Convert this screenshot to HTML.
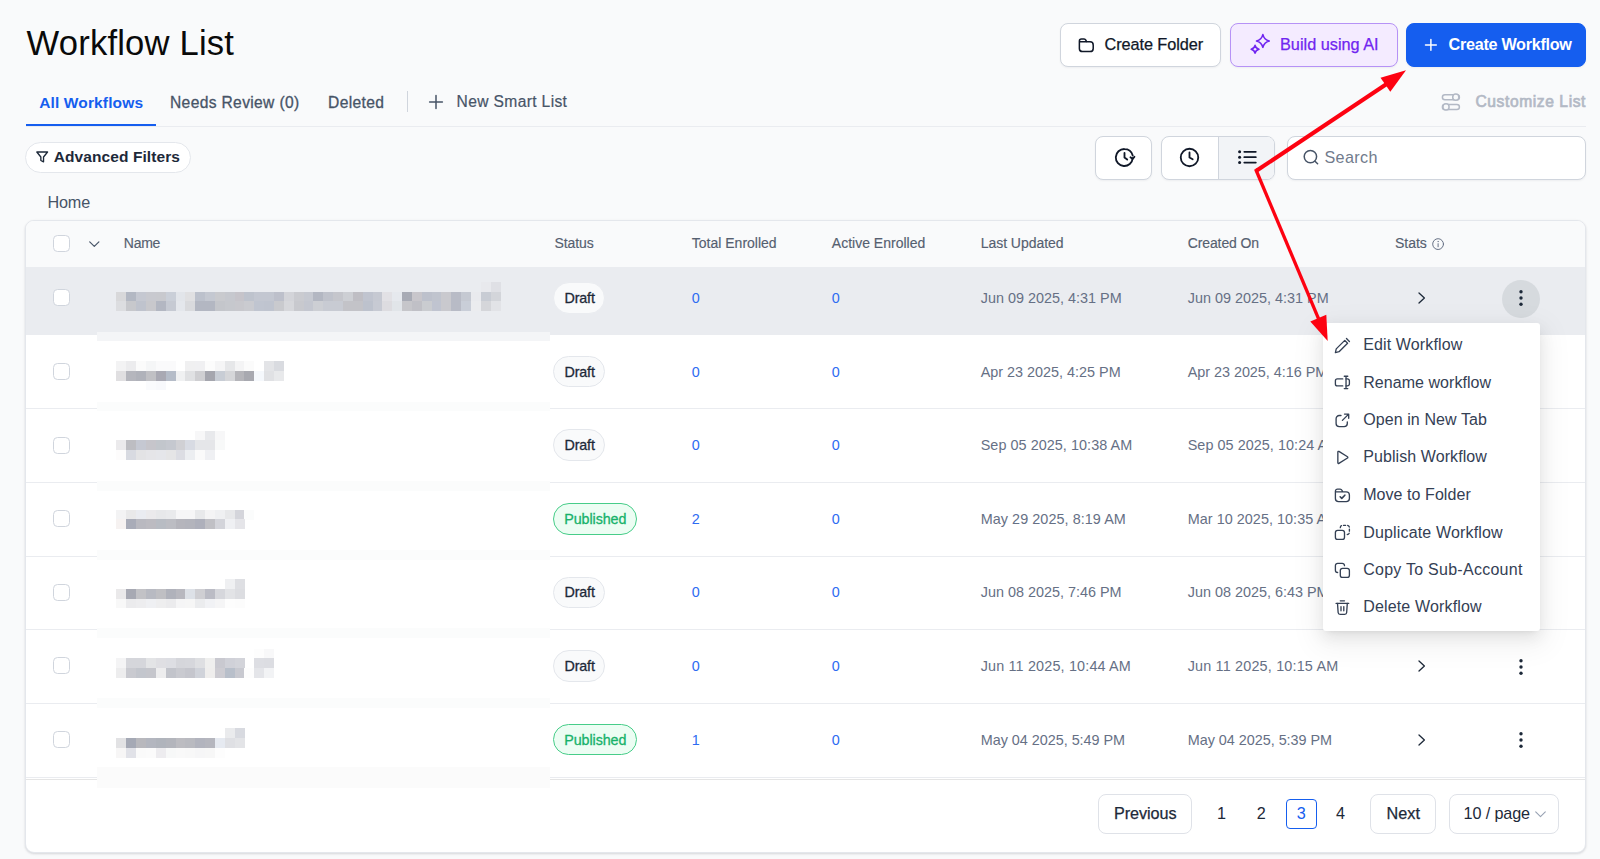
<!DOCTYPE html>
<html lang="en">
<head>
<meta charset="utf-8">
<title>Workflow List</title>
<style>
*{box-sizing:border-box}
html,body{margin:0;padding:0}
body{width:1600px;height:859px;overflow:hidden;position:relative;background:#f9fafb;font-family:"Liberation Sans",sans-serif;color:#101828}
.abs,.t,svg.i{position:absolute}
.t{white-space:pre;line-height:1;margin:0;font-weight:400;z-index:5}
h1.t{font-weight:400}
svg.i{fill:none;stroke-linecap:round;stroke-linejoin:round;overflow:visible;z-index:5}
.btn{position:absolute;border-radius:8px;border:1px solid #d0d5dd;background:#fff;box-shadow:0 1px 2px rgba(16,24,40,.05)}
.card{left:25px;top:220px;width:1561px;height:633px;border:1px solid #e4e7ec;border-radius:9px;background:#fff;box-shadow:0 1px 3px rgba(16,24,40,.10),0 1px 2px rgba(16,24,40,.06);overflow:hidden}
.thead{left:0;top:0;width:100%;height:46px;background:#f9fafb}
.row-hi{left:0;top:46px;width:100%;height:68px;background:#eaecf0}
.line{left:0;width:100%;height:1px;background:#eaecf0}
.cb{position:absolute;left:53.2px;width:17px;height:17px;border:1px solid #d0d5dd;border-radius:4.5px;background:#fff;z-index:4}
.pill{position:absolute;left:553.3px;height:31.5px;border-radius:16px;border:1px solid #e4e7ec;background:#f9fafb;z-index:3}
.pill.d{width:52px}
.pill.p{width:83.5px;border-color:#47cd89;background:#ecfdf3}
.menu{left:1323.3px;top:323px;width:216.7px;height:308px;background:#fff;border-radius:3px;z-index:8;box-shadow:0 3px 6px -4px rgba(0,0,0,.12),0 6px 16px 0 rgba(0,0,0,.08),0 9px 28px 8px rgba(0,0,0,.05)}
.t.dd{z-index:9}
.pg{position:absolute;top:794px;height:39.500px;border:1px solid #dfe2e8;border-radius:8px;background:#fff;z-index:3}
</style>
</head>
<body>

<!-- ======= page header buttons ======= -->
<div class="btn" style="left:1060px;top:22.500px;width:161.400px;height:44px"></div>
<div class="btn" style="left:1230px;top:22.500px;width:167.600px;height:44px;border-color:#b692f6;background:#f4ebff"></div>
<div class="btn" style="left:1406.400px;top:22.500px;width:179.600px;height:44px;border-color:#155eef;background:#155eef"></div>

<!-- folder icon -->
<svg class="i" style="left:1078.3px;top:36.8px" width="16.6" height="16.6" viewBox="0 0 24 24" stroke="#101828" stroke-width="2.2"><path d="M12.5 7l-1.2-2.4A2.8 2.8 0 0 0 8.8 3H5a3 3 0 0 0-3 3v1m0 0h15.5A4.5 4.5 0 0 1 22 11.5v5a4.500 4.500 0 0 1-4.500 4.500H6.500A4.500 4.500 0 0 1 2 16.500z"/></svg>
<!-- sparkle icon -->
<svg class="i" style="left:1249.6px;top:34.2px" width="20.6" height="20.6" viewBox="0 0 24 24" stroke="#7025f0" stroke-width="1.900"><path d="M15.00 0.70Q16.48 6.62 22.40 8.10Q16.48 9.58 15.00 15.50Q13.52 9.58 7.60 8.10Q13.52 6.62 15.00 0.70z"/><path d="M5.90 13.30Q6.80 16.90 10.40 17.80Q6.80 18.70 5.90 22.30Q5.00 18.70 1.40 17.80Q5.00 16.90 5.90 13.30z"/></svg>
<!-- plus (create workflow) -->
<svg class="i" style="left:1425px;top:39.2px" width="11.8" height="11.8" viewBox="0 0 12 12" stroke="#fff" stroke-width="1.5"><path d="M6 .5v11M.5 6h11"/></svg>

<!-- ======= tabs ======= -->
<div class="abs" style="left:26px;top:126px;width:1560px;height:1px;background:#eaecf0"></div>
<div class="abs" style="left:26px;top:123.6px;width:130px;height:2.6px;background:#155eef"></div>
<div class="abs" style="left:407px;top:91px;width:1px;height:21px;background:#d0d5dd"></div>
<svg class="i" style="left:429.4px;top:95px" width="14" height="14" viewBox="0 0 14 14" stroke="#475467" stroke-width="1.5"><path d="M7 .6v12.800M.6 7h12.800"/></svg>
<!-- customize list icon -->
<svg class="i" style="left:1441px;top:92px" width="20" height="20" viewBox="0 0 20 20" stroke="#b3b9c5" stroke-width="1.500"><rect x="1.400" y="2.700" width="17" height="5" rx="2.500"/><circle cx="14.800" cy="5.200" r="3.100" fill="#f9fafb"/><rect x="1.400" y="12.400" width="17" height="5" rx="2.500"/><circle cx="5" cy="14.900" r="3.100" fill="#f9fafb"/></svg>

<!-- ======= toolbar ======= -->
<div class="abs" style="left:25px;top:142px;width:166px;height:31px;border:1px solid #e4e7ec;border-radius:16px;background:#fff"></div>
<svg class="i" style="left:36.400px;top:151.300px" width="12.400" height="12.400" viewBox="0 0 12 12" stroke="#1d2939" stroke-width="1.300"><path d="M.8 1h10.400L7.300 5.800v4.700L4.700 9.200V5.800z"/></svg>

<div class="btn" style="left:1095px;top:136px;width:57px;height:44px"></div>
<div class="btn" style="left:1161px;top:136px;width:114px;height:44px;overflow:hidden"><div class="abs" style="left:56px;top:0;width:58px;height:100%;background:#f2f4f7;border-left:1px solid #d0d5dd"></div></div>
<div class="btn" style="left:1287px;top:136px;width:299px;height:44px"></div>
<!-- clock fast-forward -->
<svg class="i" style="left:1113.5px;top:147px" width="21" height="21" viewBox="0 0 24 24" stroke="#101828" stroke-width="2.100"><path d="M21.400 12.900A9.700 9.700 0 1 1 12 2.300a9.700 9.700 0 0 1 9.400 7.400"/><path d="M12 6.800V12l3.100 2.400"/><path d="M23.300 11.200l-2 2.400-2.500-1.900" /></svg>
<!-- clock -->
<svg class="i" style="left:1178.9px;top:147px" width="21" height="21" viewBox="0 0 24 24" stroke="#101828" stroke-width="2.100"><circle cx="12" cy="12" r="10"/><path d="M12 6.300V12l3.600 2"/></svg>
<!-- list -->
<svg class="i" style="left:1237px;top:148px" width="20" height="18" viewBox="0 0 20 18" stroke="#101828" stroke-width="1.800"><path d="M7.300 3.800h11.500M7.300 9.200h11.500M7.300 14.600h11.500"/><g fill="#101828" stroke="none"><circle cx="2.600" cy="3.800" r="1.500"/><circle cx="2.600" cy="9.200" r="1.500"/><circle cx="2.600" cy="14.600" r="1.500"/></g></svg>
<!-- search -->
<svg class="i" style="left:1302.500px;top:149px" width="16" height="16" viewBox="0 0 16 16" stroke="#475467" stroke-width="1.500"><circle cx="7.400" cy="7.600" r="6.200"/><path d="M12 12.200l2.600 2.600"/></svg>

<!-- ======= table card ======= -->
<div class="abs card">
  <div class="abs thead"></div>
  <div class="abs row-hi"></div>
  <div class="abs line" style="top:187px"></div>
  <div class="abs line" style="top:260.500px"></div>
  <div class="abs line" style="top:335px"></div>
  <div class="abs line" style="top:408px"></div>
  <div class="abs line" style="top:481.500px"></div>
  <div class="abs line" style="top:555.500px"></div>
  <div class="abs line" style="top:557.500px;background:#e5e5e5"></div>
</div>

<!-- checkboxes -->
<div class="cb" style="top:235.200px"></div>
<div class="cb" style="top:288.900px"></div>
<div class="cb" style="top:362.900px"></div>
<div class="cb" style="top:436.500px"></div>
<div class="cb" style="top:510px"></div>
<div class="cb" style="top:583.600px"></div>
<div class="cb" style="top:657.200px"></div>
<div class="cb" style="top:730.800px"></div>
<!-- header chevron + info -->
<svg class="i" style="left:88.600px;top:240.800px" width="10.600" height="6.400" viewBox="0 0 10.600 6.400" stroke="#475467" stroke-width="1.200"><path d="M.7.800l4.600 4.600L9.900.8"/></svg>
<svg class="i" style="left:1432.300px;top:237.600px" width="12.200" height="12.200" viewBox="0 0 12.200 12.200" stroke="#667085" stroke-width="1"><circle cx="6.100" cy="6.100" r="5.400"/><path d="M6.100 5.700v3.100"/><circle cx="6.100" cy="3.600" r=".45" fill="#667085" stroke-width=".4"/></svg>

<!-- mosaic (pixelated/redacted workflow names) -->
<svg class="abs" style="left:0;top:0;z-index:2" width="1600" height="859" viewBox="0 0 1600 859" shape-rendering="crispEdges">
<rect x="96.8" y="331.7" width="452.9" height="455.9" fill="#ffffff"/>
<rect x="96.8" y="331.7" width="452.9" height="9.75" fill="#f4f5f7"/>
<rect x="96.8" y="401.5" width="452.9" height="9.75" fill="#fbfcfc"/>
<rect x="96.8" y="480.9" width="452.9" height="9.75" fill="#fbfcfc"/>
<rect x="96.8" y="550.3" width="452.9" height="9.75" fill="#fbfcfc"/>
<rect x="96.8" y="628.4" width="452.9" height="9.75" fill="#fbfcfc"/>
<rect x="96.8" y="698.0" width="452.9" height="9.75" fill="#fbfcfc"/>
<rect x="96.8" y="767.0" width="452.9" height="20.6" fill="#fbfbfb"/>
<rect x="480.85" y="282.00" width="9.90" height="9.80" fill="#e8e9ed"/>
<rect x="490.70" y="282.00" width="9.90" height="9.80" fill="#dfe0e5"/>
<rect x="116.40" y="291.60" width="9.90" height="9.80" fill="#d8d8da"/>
<rect x="126.25" y="291.60" width="9.90" height="9.80" fill="#b3b8c3"/>
<rect x="136.10" y="291.60" width="9.90" height="9.80" fill="#c5c8d1"/>
<rect x="145.95" y="291.60" width="9.90" height="9.80" fill="#c8c9cf"/>
<rect x="155.80" y="291.60" width="9.90" height="9.80" fill="#c8c9ce"/>
<rect x="165.65" y="291.60" width="9.90" height="9.80" fill="#cacfd8"/>
<rect x="175.50" y="291.60" width="9.90" height="9.80" fill="#e2e5ea"/>
<rect x="185.35" y="291.60" width="9.90" height="9.80" fill="#e0e0e2"/>
<rect x="195.20" y="291.60" width="9.90" height="9.80" fill="#bcc1cc"/>
<rect x="205.05" y="291.60" width="9.90" height="9.80" fill="#c4c8d1"/>
<rect x="214.90" y="291.60" width="9.90" height="9.80" fill="#c9cace"/>
<rect x="224.75" y="291.60" width="9.90" height="9.80" fill="#c6c8ce"/>
<rect x="234.60" y="291.60" width="9.90" height="9.80" fill="#c6c4ca"/>
<rect x="244.45" y="291.60" width="9.90" height="9.80" fill="#bec3cd"/>
<rect x="254.30" y="291.60" width="9.90" height="9.80" fill="#c3c7d1"/>
<rect x="264.15" y="291.60" width="9.90" height="9.80" fill="#c3c7d1"/>
<rect x="274.00" y="291.60" width="9.90" height="9.80" fill="#bdc0cb"/>
<rect x="283.85" y="291.60" width="9.90" height="9.80" fill="#d3d4d9"/>
<rect x="293.70" y="291.60" width="9.90" height="9.80" fill="#cacbd0"/>
<rect x="303.55" y="291.60" width="9.90" height="9.80" fill="#c6c9d1"/>
<rect x="313.40" y="291.60" width="9.90" height="9.80" fill="#b3b7c2"/>
<rect x="323.25" y="291.60" width="9.90" height="9.80" fill="#bfc2cb"/>
<rect x="333.10" y="291.60" width="9.90" height="9.80" fill="#c5c6cc"/>
<rect x="342.95" y="291.60" width="9.90" height="9.80" fill="#cdcfd4"/>
<rect x="352.80" y="291.60" width="9.90" height="9.80" fill="#bfbec4"/>
<rect x="362.65" y="291.60" width="9.90" height="9.80" fill="#c0c4cf"/>
<rect x="372.50" y="291.60" width="9.90" height="9.80" fill="#c6c9d2"/>
<rect x="382.35" y="291.60" width="9.90" height="9.80" fill="#e2e1e5"/>
<rect x="392.20" y="291.60" width="9.90" height="9.80" fill="#e6e9ee"/>
<rect x="402.05" y="291.60" width="9.90" height="9.80" fill="#a8abb5"/>
<rect x="411.90" y="291.60" width="9.90" height="9.80" fill="#c8c6cb"/>
<rect x="421.75" y="291.60" width="9.90" height="9.80" fill="#bdc1cc"/>
<rect x="431.60" y="291.60" width="9.90" height="9.80" fill="#c0c4ce"/>
<rect x="441.45" y="291.60" width="9.90" height="9.80" fill="#c9c9ce"/>
<rect x="451.30" y="291.60" width="9.90" height="9.80" fill="#b8bbc6"/>
<rect x="461.15" y="291.60" width="9.90" height="9.80" fill="#c5c9d2"/>
<rect x="471.00" y="291.60" width="9.90" height="9.80" fill="#e9eaee"/>
<rect x="480.85" y="291.60" width="9.90" height="9.80" fill="#c8ccd4"/>
<rect x="490.70" y="291.60" width="9.90" height="9.80" fill="#d3d5da"/>
<rect x="116.40" y="301.30" width="9.90" height="9.80" fill="#dcdde0"/>
<rect x="126.25" y="301.30" width="9.90" height="9.80" fill="#c7c8cc"/>
<rect x="136.10" y="301.30" width="9.90" height="9.80" fill="#bfc3cd"/>
<rect x="145.95" y="301.30" width="9.90" height="9.80" fill="#c8c8cc"/>
<rect x="155.80" y="301.30" width="9.90" height="9.80" fill="#b3b7c2"/>
<rect x="165.65" y="301.30" width="9.90" height="9.80" fill="#c6cad3"/>
<rect x="175.50" y="301.30" width="9.90" height="9.80" fill="#e4e7ec"/>
<rect x="185.35" y="301.30" width="9.90" height="9.80" fill="#d9dadd"/>
<rect x="195.20" y="301.30" width="9.90" height="9.80" fill="#b3b7c2"/>
<rect x="205.05" y="301.30" width="9.90" height="9.80" fill="#b3b7c2"/>
<rect x="214.90" y="301.30" width="9.90" height="9.80" fill="#c4c6cb"/>
<rect x="224.75" y="301.30" width="9.90" height="9.80" fill="#c6c8cd"/>
<rect x="234.60" y="301.30" width="9.90" height="9.80" fill="#c8c8cd"/>
<rect x="244.45" y="301.30" width="9.90" height="9.80" fill="#cacbd0"/>
<rect x="254.30" y="301.30" width="9.90" height="9.80" fill="#c0c5d0"/>
<rect x="264.15" y="301.30" width="9.90" height="9.80" fill="#bfc4cf"/>
<rect x="274.00" y="301.30" width="9.90" height="9.80" fill="#c9cace"/>
<rect x="283.85" y="301.30" width="9.90" height="9.80" fill="#d6d7db"/>
<rect x="293.70" y="301.30" width="9.90" height="9.80" fill="#c8c9ce"/>
<rect x="303.55" y="301.30" width="9.90" height="9.80" fill="#c4c7d0"/>
<rect x="313.40" y="301.30" width="9.90" height="9.80" fill="#cdcfd4"/>
<rect x="323.25" y="301.30" width="9.90" height="9.80" fill="#c8cbd3"/>
<rect x="333.10" y="301.30" width="9.90" height="9.80" fill="#c8cbd3"/>
<rect x="342.95" y="301.30" width="9.90" height="9.80" fill="#c3c3c8"/>
<rect x="352.80" y="301.30" width="9.90" height="9.80" fill="#c3c3c8"/>
<rect x="362.65" y="301.30" width="9.90" height="9.80" fill="#bdc2cd"/>
<rect x="372.50" y="301.30" width="9.90" height="9.80" fill="#c7cad3"/>
<rect x="382.35" y="301.30" width="9.90" height="9.80" fill="#dddce0"/>
<rect x="392.20" y="301.30" width="9.90" height="9.80" fill="#e1e5e9"/>
<rect x="402.05" y="301.30" width="9.90" height="9.80" fill="#c6c6ca"/>
<rect x="411.90" y="301.30" width="9.90" height="9.80" fill="#c0c0c6"/>
<rect x="421.75" y="301.30" width="9.90" height="9.80" fill="#caccd0"/>
<rect x="431.60" y="301.30" width="9.90" height="9.80" fill="#c0c4d0"/>
<rect x="441.45" y="301.30" width="9.90" height="9.80" fill="#c9c9ce"/>
<rect x="451.30" y="301.30" width="9.90" height="9.80" fill="#b8bbc6"/>
<rect x="461.15" y="301.30" width="9.90" height="9.80" fill="#c9ced8"/>
<rect x="471.00" y="301.30" width="9.90" height="9.80" fill="#ebecef"/>
<rect x="480.85" y="301.30" width="9.90" height="9.80" fill="#d5d6da"/>
<rect x="490.70" y="301.30" width="9.90" height="9.80" fill="#e2e3e7"/>
<rect x="116.40" y="361.00" width="9.90" height="9.80" fill="#f3f3f4"/>
<rect x="126.25" y="361.00" width="9.90" height="9.80" fill="#ececee"/>
<rect x="136.10" y="361.00" width="9.90" height="9.80" fill="#fbfbfb"/>
<rect x="145.95" y="361.00" width="9.90" height="9.80" fill="#f5f6f7"/>
<rect x="155.80" y="361.00" width="9.90" height="9.80" fill="#fafafb"/>
<rect x="165.65" y="361.00" width="9.90" height="9.80" fill="#fafafb"/>
<rect x="185.35" y="361.00" width="9.90" height="9.80" fill="#f0f0f1"/>
<rect x="195.20" y="361.00" width="9.90" height="9.80" fill="#f0f0f2"/>
<rect x="205.05" y="361.00" width="9.90" height="9.80" fill="#fcfcfc"/>
<rect x="214.90" y="361.00" width="9.90" height="9.80" fill="#f5f5f6"/>
<rect x="224.75" y="361.00" width="9.90" height="9.80" fill="#e6e7e9"/>
<rect x="234.60" y="361.00" width="9.90" height="9.80" fill="#f4f4f5"/>
<rect x="244.45" y="361.00" width="9.90" height="9.80" fill="#fbfbfb"/>
<rect x="264.15" y="361.00" width="9.90" height="9.80" fill="#e3e4e7"/>
<rect x="274.00" y="361.00" width="9.90" height="9.80" fill="#d9dbe0"/>
<rect x="116.40" y="370.80" width="9.90" height="9.80" fill="#e0dfe1"/>
<rect x="126.25" y="370.80" width="9.90" height="9.80" fill="#b5b6bd"/>
<rect x="136.10" y="370.80" width="9.90" height="9.80" fill="#b0b2ba"/>
<rect x="145.95" y="370.80" width="9.90" height="9.80" fill="#c0c0c4"/>
<rect x="155.80" y="370.80" width="9.90" height="9.80" fill="#a9a9b3"/>
<rect x="165.65" y="370.80" width="9.90" height="9.80" fill="#b5bcc8"/>
<rect x="175.50" y="370.80" width="9.90" height="9.80" fill="#f0f1f2"/>
<rect x="185.35" y="370.80" width="9.90" height="9.80" fill="#e0e1e3"/>
<rect x="195.20" y="370.80" width="9.90" height="9.80" fill="#cfcfd2"/>
<rect x="205.05" y="370.80" width="9.90" height="9.80" fill="#a5a6ae"/>
<rect x="214.90" y="370.80" width="9.90" height="9.80" fill="#c8cdd5"/>
<rect x="224.75" y="370.80" width="9.90" height="9.80" fill="#d5d6d9"/>
<rect x="234.60" y="370.80" width="9.90" height="9.80" fill="#b5b5ba"/>
<rect x="244.45" y="370.80" width="9.90" height="9.80" fill="#a8a9b0"/>
<rect x="254.30" y="370.80" width="9.90" height="9.80" fill="#f5f8fc"/>
<rect x="264.15" y="370.80" width="9.90" height="9.80" fill="#e0e1e4"/>
<rect x="274.00" y="370.80" width="9.90" height="9.80" fill="#e8e9eb"/>
<rect x="145.95" y="380.50" width="9.90" height="9.80" fill="#fafbfd"/>
<rect x="155.80" y="380.50" width="9.90" height="9.80" fill="#f8f9fc"/>
<rect x="195.20" y="430.60" width="9.90" height="9.80" fill="#f7f7f8"/>
<rect x="205.05" y="430.60" width="9.90" height="9.80" fill="#e8e9ec"/>
<rect x="214.90" y="430.60" width="9.90" height="9.80" fill="#f7f7f8"/>
<rect x="116.40" y="440.40" width="9.90" height="9.80" fill="#ebeaec"/>
<rect x="126.25" y="440.40" width="9.90" height="9.80" fill="#bdbdc2"/>
<rect x="136.10" y="440.40" width="9.90" height="9.80" fill="#c5c8d2"/>
<rect x="145.95" y="440.40" width="9.90" height="9.80" fill="#c6c5cb"/>
<rect x="155.80" y="440.40" width="9.90" height="9.80" fill="#c2c6cc"/>
<rect x="165.65" y="440.40" width="9.90" height="9.80" fill="#c5c8cf"/>
<rect x="175.50" y="440.40" width="9.90" height="9.80" fill="#d0d0d4"/>
<rect x="185.35" y="440.40" width="9.90" height="9.80" fill="#d8dbe3"/>
<rect x="195.20" y="440.40" width="9.90" height="9.80" fill="#e5e6e9"/>
<rect x="205.05" y="440.40" width="9.90" height="9.80" fill="#e5e6e9"/>
<rect x="214.90" y="440.40" width="9.90" height="9.80" fill="#f8f9f9"/>
<rect x="116.40" y="450.10" width="9.90" height="9.80" fill="#fdfcfc"/>
<rect x="126.25" y="450.10" width="9.90" height="9.80" fill="#d8dae1"/>
<rect x="136.10" y="450.10" width="9.90" height="9.80" fill="#e3e3e5"/>
<rect x="145.95" y="450.10" width="9.90" height="9.80" fill="#e5e5e8"/>
<rect x="155.80" y="450.10" width="9.90" height="9.80" fill="#e5e6ea"/>
<rect x="165.65" y="450.10" width="9.90" height="9.80" fill="#e5e5e6"/>
<rect x="175.50" y="450.10" width="9.90" height="9.80" fill="#dcdde3"/>
<rect x="185.35" y="450.10" width="9.90" height="9.80" fill="#eceef1"/>
<rect x="195.20" y="450.10" width="9.90" height="9.80" fill="#fafafa"/>
<rect x="205.05" y="450.10" width="9.90" height="9.80" fill="#eff0f3"/>
<rect x="116.40" y="510.00" width="9.90" height="9.80" fill="#f3f3f4"/>
<rect x="126.25" y="510.00" width="9.90" height="9.80" fill="#e9e9ea"/>
<rect x="136.10" y="510.00" width="9.90" height="9.80" fill="#eaecf1"/>
<rect x="145.95" y="510.00" width="9.90" height="9.80" fill="#ebeaec"/>
<rect x="155.80" y="510.00" width="9.90" height="9.80" fill="#e7e8ea"/>
<rect x="165.65" y="510.00" width="9.90" height="9.80" fill="#e9eaec"/>
<rect x="175.50" y="510.00" width="9.90" height="9.80" fill="#f6f6f7"/>
<rect x="185.35" y="510.00" width="9.90" height="9.80" fill="#f6f6f7"/>
<rect x="195.20" y="510.00" width="9.90" height="9.80" fill="#e8e9eb"/>
<rect x="205.05" y="510.00" width="9.90" height="9.80" fill="#f4f4f5"/>
<rect x="214.90" y="510.00" width="9.90" height="9.80" fill="#eff0f2"/>
<rect x="224.75" y="510.00" width="9.90" height="9.80" fill="#e7e8ea"/>
<rect x="234.60" y="510.00" width="9.90" height="9.80" fill="#d4d5db"/>
<rect x="244.45" y="510.00" width="9.90" height="9.80" fill="#fbfcfc"/>
<rect x="116.40" y="519.40" width="9.90" height="9.80" fill="#f6f2f1"/>
<rect x="126.25" y="519.40" width="9.90" height="9.80" fill="#a9acb8"/>
<rect x="136.10" y="519.40" width="9.90" height="9.80" fill="#b9b9c0"/>
<rect x="145.95" y="519.40" width="9.90" height="9.80" fill="#bcbbc1"/>
<rect x="155.80" y="519.40" width="9.90" height="9.80" fill="#b8bcc3"/>
<rect x="165.65" y="519.40" width="9.90" height="9.80" fill="#bcbdc3"/>
<rect x="175.50" y="519.40" width="9.90" height="9.80" fill="#b5b5bc"/>
<rect x="185.35" y="519.40" width="9.90" height="9.80" fill="#b3b4bc"/>
<rect x="195.20" y="519.40" width="9.90" height="9.80" fill="#aeb0bb"/>
<rect x="205.05" y="519.40" width="9.90" height="9.80" fill="#c0c0c5"/>
<rect x="214.90" y="519.40" width="9.90" height="9.80" fill="#d3d4da"/>
<rect x="224.75" y="519.40" width="9.90" height="9.80" fill="#eff0f3"/>
<rect x="234.60" y="519.40" width="9.90" height="9.80" fill="#e5e5e9"/>
<rect x="224.75" y="579.00" width="9.90" height="9.80" fill="#eff0f2"/>
<rect x="234.60" y="579.00" width="9.90" height="9.80" fill="#dedfe3"/>
<rect x="116.40" y="588.80" width="9.90" height="9.80" fill="#eae9ea"/>
<rect x="126.25" y="588.80" width="9.90" height="9.80" fill="#a7a9b3"/>
<rect x="136.10" y="588.80" width="9.90" height="9.80" fill="#c2c2c6"/>
<rect x="145.95" y="588.80" width="9.90" height="9.80" fill="#b8bac2"/>
<rect x="155.80" y="588.80" width="9.90" height="9.80" fill="#bfbfc3"/>
<rect x="165.65" y="588.80" width="9.90" height="9.80" fill="#b0b2bb"/>
<rect x="175.50" y="588.80" width="9.90" height="9.80" fill="#b8b8bf"/>
<rect x="185.35" y="588.80" width="9.90" height="9.80" fill="#dde1e7"/>
<rect x="195.20" y="588.80" width="9.90" height="9.80" fill="#cfcfd3"/>
<rect x="205.05" y="588.80" width="9.90" height="9.80" fill="#bbbcc5"/>
<rect x="214.90" y="588.80" width="9.90" height="9.80" fill="#d6d7dc"/>
<rect x="224.75" y="588.80" width="9.90" height="9.80" fill="#e2e3e6"/>
<rect x="234.60" y="588.80" width="9.90" height="9.80" fill="#dcdde1"/>
<rect x="116.40" y="598.60" width="9.90" height="9.80" fill="#f8f8f8"/>
<rect x="126.25" y="598.60" width="9.90" height="9.80" fill="#ebebed"/>
<rect x="136.10" y="598.60" width="9.90" height="9.80" fill="#ededef"/>
<rect x="145.95" y="598.60" width="9.90" height="9.80" fill="#eff0f3"/>
<rect x="155.80" y="598.60" width="9.90" height="9.80" fill="#eeeeef"/>
<rect x="165.65" y="598.60" width="9.90" height="9.80" fill="#ebebed"/>
<rect x="175.50" y="598.60" width="9.90" height="9.80" fill="#f5f5f6"/>
<rect x="185.35" y="598.60" width="9.90" height="9.80" fill="#f6f6f6"/>
<rect x="195.20" y="598.60" width="9.90" height="9.80" fill="#ebecee"/>
<rect x="205.05" y="598.60" width="9.90" height="9.80" fill="#f1f2f5"/>
<rect x="214.90" y="598.60" width="9.90" height="9.80" fill="#f5f5f6"/>
<rect x="224.75" y="598.60" width="9.90" height="9.80" fill="#fdfdfd"/>
<rect x="234.60" y="598.60" width="9.90" height="9.80" fill="#fcfcfc"/>
<rect x="254.30" y="648.80" width="9.90" height="9.80" fill="#fdfdfd"/>
<rect x="264.15" y="648.80" width="9.90" height="9.80" fill="#f8f8f9"/>
<rect x="116.40" y="658.40" width="9.90" height="9.80" fill="#f4f4f5"/>
<rect x="126.25" y="658.40" width="9.90" height="9.80" fill="#d5d6db"/>
<rect x="136.10" y="658.40" width="9.90" height="9.80" fill="#d5d6db"/>
<rect x="145.95" y="658.40" width="9.90" height="9.80" fill="#e3e4e6"/>
<rect x="155.80" y="658.40" width="9.90" height="9.80" fill="#dfdfe3"/>
<rect x="165.65" y="658.40" width="9.90" height="9.80" fill="#dddee3"/>
<rect x="175.50" y="658.40" width="9.90" height="9.80" fill="#d5d6db"/>
<rect x="185.35" y="658.40" width="9.90" height="9.80" fill="#d6d7dc"/>
<rect x="195.20" y="658.40" width="9.90" height="9.80" fill="#dedfe2"/>
<rect x="205.05" y="658.40" width="9.90" height="9.80" fill="#efefee"/>
<rect x="214.90" y="658.40" width="9.90" height="9.80" fill="#c9c9d0"/>
<rect x="224.75" y="658.40" width="9.90" height="9.80" fill="#d0d1d8"/>
<rect x="234.60" y="658.40" width="9.90" height="9.80" fill="#d3d4da"/>
<rect x="254.30" y="658.40" width="9.90" height="9.80" fill="#dddee3"/>
<rect x="264.15" y="658.40" width="9.90" height="9.80" fill="#dcdde2"/>
<rect x="116.40" y="668.10" width="9.90" height="9.80" fill="#ededee"/>
<rect x="126.25" y="668.10" width="9.90" height="9.80" fill="#c9cad0"/>
<rect x="136.10" y="668.10" width="9.90" height="9.80" fill="#c3c6cd"/>
<rect x="145.95" y="668.10" width="9.90" height="9.80" fill="#c5c6cc"/>
<rect x="155.80" y="668.10" width="9.90" height="9.80" fill="#ededee"/>
<rect x="165.65" y="668.10" width="9.90" height="9.80" fill="#c2c4cb"/>
<rect x="175.50" y="668.10" width="9.90" height="9.80" fill="#c9cad0"/>
<rect x="185.35" y="668.10" width="9.90" height="9.80" fill="#c5c6cd"/>
<rect x="195.20" y="668.10" width="9.90" height="9.80" fill="#d0d3da"/>
<rect x="205.05" y="668.10" width="9.90" height="9.80" fill="#efeeed"/>
<rect x="214.90" y="668.10" width="9.90" height="9.80" fill="#cdccd2"/>
<rect x="224.75" y="668.10" width="9.90" height="9.80" fill="#b8bfca"/>
<rect x="234.60" y="668.10" width="9.90" height="9.80" fill="#c8c9d0"/>
<rect x="244.45" y="668.10" width="9.90" height="9.80" fill="#fdfdfd"/>
<rect x="254.30" y="668.10" width="9.90" height="9.80" fill="#e4e5e9"/>
<rect x="264.15" y="668.10" width="9.90" height="9.80" fill="#f2f3f5"/>
<rect x="224.75" y="728.20" width="9.90" height="9.80" fill="#eaebed"/>
<rect x="234.60" y="728.20" width="9.90" height="9.80" fill="#d8dae0"/>
<rect x="116.40" y="738.00" width="9.90" height="9.80" fill="#e2e2e4"/>
<rect x="126.25" y="738.00" width="9.90" height="9.80" fill="#a5a9b5"/>
<rect x="136.10" y="738.00" width="9.90" height="9.80" fill="#b8b8bd"/>
<rect x="145.95" y="738.00" width="9.90" height="9.80" fill="#b3b6bf"/>
<rect x="155.80" y="738.00" width="9.90" height="9.80" fill="#b0b4bc"/>
<rect x="165.65" y="738.00" width="9.90" height="9.80" fill="#b3b5bc"/>
<rect x="175.50" y="738.00" width="9.90" height="9.80" fill="#bcbcc1"/>
<rect x="185.35" y="738.00" width="9.90" height="9.80" fill="#b9bac0"/>
<rect x="195.20" y="738.00" width="9.90" height="9.80" fill="#b2b4be"/>
<rect x="205.05" y="738.00" width="9.90" height="9.80" fill="#b5b6be"/>
<rect x="214.90" y="738.00" width="9.90" height="9.80" fill="#e6eaf1"/>
<rect x="224.75" y="738.00" width="9.90" height="9.80" fill="#dfe0e4"/>
<rect x="234.60" y="738.00" width="9.90" height="9.80" fill="#e3e4e7"/>
<rect x="116.40" y="747.70" width="9.90" height="9.80" fill="#f7f6f6"/>
<rect x="126.25" y="747.70" width="9.90" height="9.80" fill="#e1e2e8"/>
<rect x="136.10" y="747.70" width="9.90" height="9.80" fill="#fafafa"/>
<rect x="145.95" y="747.70" width="9.90" height="9.80" fill="#fbfbfb"/>
<rect x="155.80" y="747.70" width="9.90" height="9.80" fill="#edecef"/>
<rect x="165.65" y="747.70" width="9.90" height="9.80" fill="#f7f8f8"/>
<rect x="175.50" y="747.70" width="9.90" height="9.80" fill="#f9f9f9"/>
<rect x="185.35" y="747.70" width="9.90" height="9.80" fill="#f8f8f8"/>
<rect x="195.20" y="747.70" width="9.90" height="9.80" fill="#f6f6f7"/>
<rect x="205.05" y="747.70" width="9.90" height="9.80" fill="#f7f7f7"/>
<rect x="214.90" y="747.70" width="9.90" height="9.80" fill="#fdfdfd"/>
</svg>

<!-- status pills -->
<div class="pill d" style="top:282.300px;border-color:#eaecf0"></div>
<div class="pill d" style="top:355.900px"></div>
<div class="pill d" style="top:429.400px"></div>
<div class="pill p" style="top:503px"></div>
<div class="pill d" style="top:576.600px"></div>
<div class="pill d" style="top:650.200px"></div>
<div class="pill p" style="top:723.800px"></div>

<!-- row chevrons + kebab menus -->
<div class="abs" style="left:1502px;top:279.500px;width:38px;height:38px;border-radius:50%;background:#d6dade;z-index:3"></div>
<svg class="i" style="left:1418.400px;top:291.600px" width="7.600" height="12" viewBox="0 0 7.600 12" stroke="#1d2939" stroke-width="1.300"><path d="M1 .9l5.400 5.100L1 11.100"/></svg>
<svg class="i" style="left:1418.400px;top:659.900px" width="7.600" height="12" viewBox="0 0 7.600 12" stroke="#1d2939" stroke-width="1.300"><path d="M1 .9l5.400 5.100L1 11.100"/></svg>
<svg class="i" style="left:1418.400px;top:733.500px" width="7.600" height="12" viewBox="0 0 7.600 12" stroke="#1d2939" stroke-width="1.300"><path d="M1 .9l5.400 5.100L1 11.100"/></svg>
<svg class="i" style="left:1518px;top:288px" width="6" height="20" viewBox="0 0 6 20"><g fill="#1d2939"><circle cx="3" cy="3.700" r="1.700"/><circle cx="3" cy="10" r="1.700"/><circle cx="3" cy="16.300" r="1.700"/></g></svg>
<svg class="i" style="left:1518px;top:656.600px" width="6" height="20" viewBox="0 0 6 20"><g fill="#1d2939"><circle cx="3" cy="3.700" r="1.700"/><circle cx="3" cy="10" r="1.700"/><circle cx="3" cy="16.300" r="1.700"/></g></svg>
<svg class="i" style="left:1518px;top:730.200px" width="6" height="20" viewBox="0 0 6 20"><g fill="#1d2939"><circle cx="3" cy="3.700" r="1.700"/><circle cx="3" cy="10" r="1.700"/><circle cx="3" cy="16.300" r="1.700"/></g></svg>

<!-- ======= pagination ======= -->
<div class="pg" style="left:1098px;width:94px"></div>
<div class="pg" style="left:1370px;width:66px"></div>
<div class="pg" style="left:1449px;width:110px"></div>
<div class="abs" style="left:1286px;top:798.500px;width:30.500px;height:30px;border:1px solid #155eef;border-radius:4px;background:#fff;z-index:3"></div>
<svg class="i" style="left:1535px;top:810.500px" width="11" height="7" viewBox="0 0 11 7" stroke="#98a2b3" stroke-width="1.100"><path d="M.7.800l4.800 4.900L10.300.8"/></svg>

<!-- ======= row action dropdown ======= -->
<div class="abs menu"></div>
<svg class="i" style="left:1334.00px;top:336.50px;z-index:9" width="16.800" height="16.800" viewBox="0 0 24 24" stroke="#344054" stroke-width="1.900"><path d="M2 22.200l1.200-5.200L15.400 4.800l4 4L7.200 21z"/><path d="M17.800 2.200l4.200 4.200"/></svg>
<svg class="i" style="left:1334.00px;top:374.00px;z-index:9" width="16.800" height="16.800" viewBox="0 0 24 24" stroke="#344054" stroke-width="1.900"><path d="M12.500 7H4.800A2.800 2.800 0 0 0 2 9.800v4.400A2.800 2.800 0 0 0 4.800 17h7.700"/><path d="M17.200 3.200v17.600M14.700 3.200h5M14.700 20.800h5"/><path d="M17.200 7h2A2.800 2.800 0 0 1 22 9.800v4.400A2.800 2.800 0 0 1 19.200 17h-2"/></svg>
<svg class="i" style="left:1334.00px;top:411.50px;z-index:9" width="16.800" height="16.800" viewBox="0 0 24 24" stroke="#344054" stroke-width="1.900"><path d="M21 9V3h-6M21 3l-9 9"/><path d="M10 5H7.500A4.500 4.500 0 0 0 3 9.500v7A4.500 4.500 0 0 0 7.500 21h7a4.500 4.500 0 0 0 4.500-4.500V14"/></svg>
<svg class="i" style="left:1334.00px;top:449.00px;z-index:9" width="16.800" height="16.800" viewBox="0 0 24 24" stroke="#344054" stroke-width="1.900"><path d="M5.500 4.300v15.400a1 1 0 0 0 1.500.850l12.300-7.700a1 1 0 0 0 0-1.700L7 3.450a1 1 0 0 0-1.500.850z"/></svg>
<svg class="i" style="left:1334.00px;top:486.50px;z-index:9" width="16.800" height="16.800" viewBox="0 0 24 24" stroke="#344054" stroke-width="1.900"><path d="M12.500 7l-1.200-2.400A2.800 2.800 0 0 0 8.800 3H5a3 3 0 0 0-3 3v1m0 0h15.500A4.500 4.500 0 0 1 22 11.500v5a4.500 4.500 0 0 1-4.500 4.500h-11A4.500 4.500 0 0 1 2 16.500z"/><path d="M8.800 14l2.300 2.300 4.400-4.600" stroke-width="2.300"/></svg>
<svg class="i" style="left:1334.00px;top:524.00px;z-index:9" width="16.800" height="16.800" viewBox="0 0 24 24" stroke="#344054" stroke-width="1.900"><rect x="2" y="9" width="13" height="13" rx="3.200"/><path d="M9 5.200A3.200 3.200 0 0 1 12.200 2h6.600A3.200 3.200 0 0 1 22 5.200v6.600a3.200 3.200 0 0 1-3.200 3.200" stroke-dasharray="3 2.900"/></svg>
<svg class="i" style="left:1334.00px;top:561.50px;z-index:9" width="16.800" height="16.800" viewBox="0 0 24 24" stroke="#344054" stroke-width="1.900"><rect x="9" y="9" width="13" height="13" rx="3.200"/><path d="M5.200 15A3.200 3.200 0 0 1 2 11.800V5.200A3.200 3.200 0 0 1 5.200 2h6.600A3.200 3.200 0 0 1 15 5.200"/></svg>
<svg class="i" style="left:1334.00px;top:599.00px;z-index:9" width="16.800" height="16.800" viewBox="0 0 24 24" stroke="#344054" stroke-width="1.900"><path d="M3 6.300h18M9 2.600h6"/><path d="M5 6.300l.9 13a2.800 2.800 0 0 0 2.800 2.600h6.600a2.800 2.800 0 0 0 2.800-2.600l.9-13"/><path d="M10 10.800v6M14 10.800v6"/></svg>

<!-- ======= text ======= -->
<h1 class="t" style="left:26.60px;top:26.00px;font-size:34.6px;color:#0a0a0a;letter-spacing:0.196px;">Workflow List</h1>
<span class="t" style="left:1104.60px;top:36.00px;font-size:16.3px;color:#101828;letter-spacing:-0.088px;-webkit-text-stroke:0.25px #101828;">Create Folder</span>
<span class="t" style="left:1280.00px;top:36.00px;font-size:16.3px;color:#7025f0;letter-spacing:-0.005px;-webkit-text-stroke:0.25px #7025f0;">Build using AI</span>
<span class="t" style="left:1448.60px;top:36.00px;font-size:16.2px;color:#ffffff;font-weight:700;letter-spacing:-0.296px;">Create Workflow</span>
<span class="t" style="left:39.20px;top:95.00px;font-size:15.5px;color:#155eef;font-weight:700;letter-spacing:0.138px;">All Workflows</span>
<span class="t" style="left:170.00px;top:95.00px;font-size:15.6px;color:#475467;letter-spacing:0.348px;-webkit-text-stroke:0.3px #475467;">Needs Review (0)</span>
<span class="t" style="left:328.00px;top:95.00px;font-size:15.6px;color:#475467;letter-spacing:0.379px;-webkit-text-stroke:0.3px #475467;">Deleted</span>
<span class="t" style="left:456.60px;top:94.00px;font-size:15.6px;color:#475467;letter-spacing:0.356px;-webkit-text-stroke:0.2px #475467;">New Smart List</span>
<span class="t" style="left:1475.50px;top:94.00px;font-size:15.6px;color:#b3b9c5;letter-spacing:0.588px;-webkit-text-stroke:0.7px #b3b9c5;">Customize List</span>
<span class="t" style="left:53.80px;top:149.00px;font-size:15.5px;color:#1d2939;font-weight:700;letter-spacing:0.081px;">Advanced Filters</span>
<span class="t" style="left:1324.40px;top:149.00px;font-size:16.2px;color:#717b8c;letter-spacing:0.367px;">Search</span>
<span class="t" style="left:47.50px;top:194.00px;font-size:16.2px;color:#475467;letter-spacing:-0.172px;">Home</span>
<span class="t" style="left:123.80px;top:236.00px;font-size:14px;color:#556070;letter-spacing:-0.265px;-webkit-text-stroke:0.15px #556070;">Name</span>
<span class="t" style="left:554.40px;top:236.00px;font-size:14px;color:#556070;letter-spacing:-0.051px;-webkit-text-stroke:0.15px #556070;">Status</span>
<span class="t" style="left:691.80px;top:236.00px;font-size:14px;color:#556070;-webkit-text-stroke:0.15px #556070;">Total Enrolled</span>
<span class="t" style="left:831.80px;top:236.00px;font-size:14px;color:#556070;letter-spacing:0.007px;-webkit-text-stroke:0.15px #556070;">Active Enrolled</span>
<span class="t" style="left:980.70px;top:236.00px;font-size:14px;color:#556070;letter-spacing:-0.041px;-webkit-text-stroke:0.15px #556070;">Last Updated</span>
<span class="t" style="left:1187.70px;top:236.00px;font-size:14px;color:#556070;letter-spacing:-0.108px;-webkit-text-stroke:0.15px #556070;">Created On</span>
<span class="t" style="left:1395.10px;top:236.00px;font-size:14px;color:#556070;letter-spacing:-0.061px;-webkit-text-stroke:0.15px #556070;">Stats</span>
<span class="t" style="left:564.50px;top:291.00px;font-size:14.3px;color:#1d2939;letter-spacing:-0.157px;-webkit-text-stroke:0.3px #1d2939;">Draft</span>
<span class="t" style="left:691.80px;top:291.00px;font-size:14.4px;color:#2e6cf2;">0</span>
<span class="t" style="left:831.80px;top:291.00px;font-size:14.4px;color:#2e6cf2;">0</span>
<span class="t" style="left:980.70px;top:291.00px;font-size:14.4px;color:#667085;letter-spacing:0.009px;">Jun 09 2025, 4:31 PM</span>
<span class="t" style="left:1187.70px;top:291.00px;font-size:14.4px;color:#667085;letter-spacing:0.009px;">Jun 09 2025, 4:31 PM</span>
<span class="t" style="left:564.50px;top:365.00px;font-size:14.3px;color:#1d2939;letter-spacing:-0.157px;-webkit-text-stroke:0.3px #1d2939;">Draft</span>
<span class="t" style="left:691.80px;top:365.00px;font-size:14.4px;color:#2e6cf2;">0</span>
<span class="t" style="left:831.80px;top:365.00px;font-size:14.4px;color:#2e6cf2;">0</span>
<span class="t" style="left:980.70px;top:365.00px;font-size:14.4px;color:#667085;">Apr 23 2025, 4:25 PM</span>
<span class="t" style="left:1187.70px;top:365.00px;font-size:14.4px;color:#667085;letter-spacing:-0.025px;">Apr 23 2025, 4:16 PM</span>
<span class="t" style="left:564.50px;top:438.00px;font-size:14.3px;color:#1d2939;letter-spacing:-0.157px;-webkit-text-stroke:0.3px #1d2939;">Draft</span>
<span class="t" style="left:691.80px;top:438.00px;font-size:14.4px;color:#2e6cf2;">0</span>
<span class="t" style="left:831.80px;top:438.00px;font-size:14.4px;color:#2e6cf2;">0</span>
<span class="t" style="left:980.70px;top:438.00px;font-size:14.4px;color:#667085;letter-spacing:0.051px;">Sep 05 2025, 10:38 AM</span>
<span class="t" style="left:1187.70px;top:438.00px;font-size:14.4px;color:#667085;letter-spacing:0.051px;">Sep 05 2025, 10:24 AM</span>
<span class="t" style="left:564.30px;top:512.00px;font-size:14.3px;color:#17b26a;letter-spacing:-0.089px;-webkit-text-stroke:0.3px #17b26a;">Published</span>
<span class="t" style="left:691.80px;top:512.00px;font-size:14.4px;color:#2e6cf2;">2</span>
<span class="t" style="left:831.80px;top:512.00px;font-size:14.4px;color:#2e6cf2;">0</span>
<span class="t" style="left:980.70px;top:512.00px;font-size:14.4px;color:#667085;letter-spacing:0.060px;">May 29 2025, 8:19 AM</span>
<span class="t" style="left:1187.70px;top:512.00px;font-size:14.4px;color:#667085;letter-spacing:0.042px;">Mar 10 2025, 10:35 AM</span>
<span class="t" style="left:564.50px;top:585.00px;font-size:14.3px;color:#1d2939;letter-spacing:-0.157px;-webkit-text-stroke:0.3px #1d2939;">Draft</span>
<span class="t" style="left:691.80px;top:585.00px;font-size:14.4px;color:#2e6cf2;">0</span>
<span class="t" style="left:831.80px;top:585.00px;font-size:14.4px;color:#2e6cf2;">0</span>
<span class="t" style="left:980.70px;top:585.00px;font-size:14.4px;color:#667085;">Jun 08 2025, 7:46 PM</span>
<span class="t" style="left:1187.70px;top:585.00px;font-size:14.4px;color:#667085;">Jun 08 2025, 6:43 PM</span>
<span class="t" style="left:564.50px;top:659.00px;font-size:14.3px;color:#1d2939;letter-spacing:-0.157px;-webkit-text-stroke:0.3px #1d2939;">Draft</span>
<span class="t" style="left:691.80px;top:659.00px;font-size:14.4px;color:#2e6cf2;">0</span>
<span class="t" style="left:831.80px;top:659.00px;font-size:14.4px;color:#2e6cf2;">0</span>
<span class="t" style="left:980.70px;top:659.00px;font-size:14.4px;color:#667085;letter-spacing:0.159px;">Jun 11 2025, 10:44 AM</span>
<span class="t" style="left:1187.70px;top:659.00px;font-size:14.4px;color:#667085;letter-spacing:0.178px;">Jun 11 2025, 10:15 AM</span>
<span class="t" style="left:564.30px;top:733.00px;font-size:14.3px;color:#17b26a;letter-spacing:-0.089px;-webkit-text-stroke:0.3px #17b26a;">Published</span>
<span class="t" style="left:691.80px;top:733.00px;font-size:14.4px;color:#2e6cf2;">1</span>
<span class="t" style="left:831.80px;top:733.00px;font-size:14.4px;color:#2e6cf2;">0</span>
<span class="t" style="left:980.70px;top:733.00px;font-size:14.4px;color:#667085;letter-spacing:-0.020px;">May 04 2025, 5:49 PM</span>
<span class="t" style="left:1187.70px;top:733.00px;font-size:14.4px;color:#667085;letter-spacing:-0.020px;">May 04 2025, 5:39 PM</span>
<span class="t dd" style="left:1363.20px;top:337.00px;font-size:16px;color:#344054;letter-spacing:0.130px;">Edit Workflow</span>
<span class="t dd" style="left:1363.20px;top:375.00px;font-size:16px;color:#344054;letter-spacing:0.056px;">Rename workflow</span>
<span class="t dd" style="left:1363.20px;top:412.00px;font-size:16px;color:#344054;letter-spacing:0.090px;">Open in New Tab</span>
<span class="t dd" style="left:1363.20px;top:449.00px;font-size:16px;color:#344054;letter-spacing:0.086px;">Publish Workflow</span>
<span class="t dd" style="left:1363.20px;top:487.00px;font-size:16px;color:#344054;letter-spacing:0.063px;">Move to Folder</span>
<span class="t dd" style="left:1363.20px;top:525.00px;font-size:16px;color:#344054;letter-spacing:0.164px;">Duplicate Workflow</span>
<span class="t dd" style="left:1363.20px;top:562.00px;font-size:16px;color:#344054;letter-spacing:0.260px;">Copy To Sub-Account</span>
<span class="t dd" style="left:1363.20px;top:599.00px;font-size:16px;color:#344054;letter-spacing:0.161px;">Delete Workflow</span>
<span class="t" style="left:1114.00px;top:805.00px;font-size:16.2px;color:#1d2939;letter-spacing:-0.061px;-webkit-text-stroke:0.25px #1d2939;">Previous</span>
<span class="t" style="left:1216.89px;top:805.00px;font-size:16.2px;color:#1d2939;">1</span>
<span class="t" style="left:1256.79px;top:805.00px;font-size:16.2px;color:#1d2939;">2</span>
<span class="t" style="left:1296.69px;top:805.00px;font-size:16.2px;color:#155eef;">3</span>
<span class="t" style="left:1336.09px;top:805.00px;font-size:16.2px;color:#1d2939;">4</span>
<span class="t" style="left:1386.40px;top:805.00px;font-size:16.2px;color:#1d2939;letter-spacing:0.076px;-webkit-text-stroke:0.25px #1d2939;">Next</span>
<span class="t" style="left:1463.50px;top:805.00px;font-size:16.2px;color:#1d2939;letter-spacing:-0.113px;">10 / page</span>

<!-- ======= red annotation arrows ======= -->
<svg class="abs" style="left:0;top:0;z-index:20" width="1600" height="859" viewBox="0 0 1600 859">
  <g stroke="#fd0211" stroke-width="3.300" fill="none" stroke-linecap="butt">
    <path d="M1256.400 170.800L1387 83.800" stroke-width="4.100"/>
    <path d="M1255.600 169L1318.500 318.600"/>
  </g>
  <g fill="#fd0211">
    <path d="M1406 70.300L1380.500 77.800L1390.300 91.800z"/>
    <path d="M1327.700 341L1310.300 321.400L1326.300 314.800z"/>
  </g>
</svg>
</body>
</html>
